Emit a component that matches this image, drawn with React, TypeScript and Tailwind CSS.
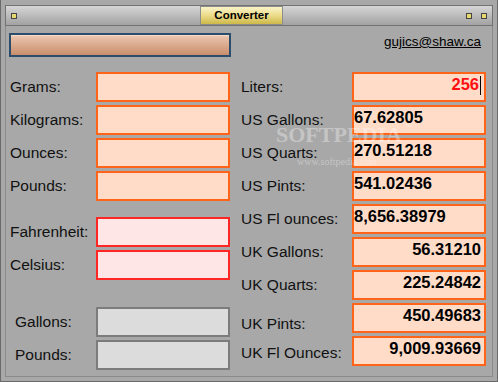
import React from "react";

const font = { fontFamily: '"Liberation Sans", Arial, sans-serif' };

type Row = { label: string; value?: string; align?: "left" | "right"; red?: boolean; nudge?: string };

const rightRows: Row[] = [
  { label: "Liters:", value: "256", align: "right", red: true },
  { label: "US Gallons:", value: "67.62805", align: "left" },
  { label: "US Quarts:", value: "270.51218", align: "left" },
  { label: "US Pints:", value: "541.02436", align: "left" },
  { label: "US Fl ounces:", value: "8,656.38979", align: "left" },
  { label: "UK Gallons:", value: "56.31210", align: "right" },
  { label: "UK Quarts:", value: "225.24842", align: "right" },
  { label: "UK Pints:", value: "450.49683", align: "right", nudge: "pt-[9px]" },
  { label: "UK Fl Ounces:", value: "9,009.93669", align: "right", nudge: "pt-[5px]" },
];

function Field({ kind, children }: { kind: "peach" | "pink" | "gray"; children?: React.ReactNode }) {
  const look =
    kind === "peach"
      ? "bg-[#ffdcc8] border-[#ff6418]"
      : kind === "pink"
      ? "bg-[#ffe6e6] border-[#ff2626]"
      : "bg-[#dcdcdc] border-[#7c7c7c]";
  return <div className={`w-[134px] h-[30px] border-2 ${look}`}>{children}</div>;
}

function LeftRow({ label, kind, indent }: { label: string; kind: "peach" | "pink" | "gray"; indent?: boolean }) {
  return (
    <div className="flex items-center justify-between h-[30px]">
      <span className={`text-[15.5px] text-[#111] ${indent ? "pl-[6px]" : "pl-[1px]"}`}>{label}</span>
      <Field kind={kind} />
    </div>
  );
}

function Square() {
  return <div className="w-[6px] h-[6px] border border-[#444] bg-[#e8d870]" />;
}

export default function App() {
  return (
    <div
      className="relative w-[498px] h-[382px] overflow-hidden bg-[#a8a8a8] border-l border-r border-b border-[#6a6a6a] pt-[5px] px-[4px] flex flex-col"
      style={font}
    >
      {/* title bar */}
      <div className="h-[21px] border border-[#727272] bg-gradient-to-b from-[#d6d6d6] to-[#a2a2a2] flex items-start">
        <div className="mt-[7px] ml-[5px]">
          <Square />
        </div>
        <div className="ml-[183px] w-[83px] h-[19px] border border-[#8c8c8c] bg-gradient-to-b from-[#faf3c8] via-[#ecdc88] to-[#cdb848] flex items-center justify-center">
          <span className="text-[11.5px] font-bold text-black">Converter</span>
        </div>
        <div className="ml-auto mr-[5px] mt-[7px] flex gap-[9px]">
          <Square />
          <Square />
        </div>
      </div>

      {/* body */}
      <div className="flex-1 border-l border-r border-b border-[#8a8a8a] mb-[4px] pl-[3px] pr-[6px]">
        <div className="flex items-start justify-between mt-[7px]">
          <div className="w-[222px] h-[24px] border-2 border-[#2c4c6c] bg-gradient-to-b from-[#ecc8b2] to-[#c88e6c] shadow-[inset_0_1px_0_#f6dccc]" />
          <span className="text-[13.5px] text-black underline mt-[-1px] mr-[5px]">gujics@shaw.ca</span>
        </div>

        <div className="flex mt-[15px]">
          {/* left column */}
          <div className="w-[221px] flex flex-col">
            <div className="flex flex-col gap-[3px]">
              <LeftRow label="Grams:" kind="peach" />
              <LeftRow label="Kilograms:" kind="peach" />
              <LeftRow label="Ounces:" kind="peach" />
              <LeftRow label="Pounds:" kind="peach" />
            </div>
            <div className="flex flex-col gap-[3px] mt-[16px]">
              <LeftRow label="Fahrenheit:" kind="pink" />
              <LeftRow label="Celsius:" kind="pink" />
            </div>
            <div className="flex flex-col gap-[3px] mt-[27px]">
              <LeftRow label="Gallons:" kind="gray" indent />
              <LeftRow label="Pounds:" kind="gray" indent />
            </div>
          </div>

          {/* right column */}
          <div className="ml-[11px] w-[245px] flex flex-col gap-[3px]">
            {rightRows.map((r) => (
              <div key={r.label} className={`flex justify-between h-[30px] ${r.nudge ? "items-start" : "items-center"}`}>
                <span className={`text-[15.5px] text-[#111] ${r.nudge ?? ""}`}>{r.label}</span>
                <Field kind="peach">
                  <div
                    className={`flex h-full pt-[1px] leading-[18px] text-[16.5px] font-bold ${
                      r.align === "right" ? "justify-end pr-[3px]" : "justify-start pl-[0px]"
                    } ${r.red ? "text-[#ff1010]" : "text-black"}`}
                  >
                    <span>{r.value}</span>
                    {r.red && <span className="ml-[1px] mt-[1px] w-[1px] h-[19px] bg-black" />}
                  </div>
                </Field>
              </div>
            ))}
          </div>
        </div>
      </div>

      {/* watermark */}
      <div className="absolute left-[275px] top-[124px] pointer-events-none text-white/35 select-none">
        <div className="text-[22px] font-bold tracking-[0px] leading-none" style={{ fontFamily: '"Liberation Serif", serif' }}>
          SOFTPEDIA<span className="text-[7px] align-top ml-[3px]">™</span>
        </div>
        <div className="text-[10px] ml-[21px] mt-[11px] leading-none" style={{ fontFamily: '"Liberation Serif", serif' }}>
          www.softpedia.com
        </div>
      </div>
    </div>
  );
}
